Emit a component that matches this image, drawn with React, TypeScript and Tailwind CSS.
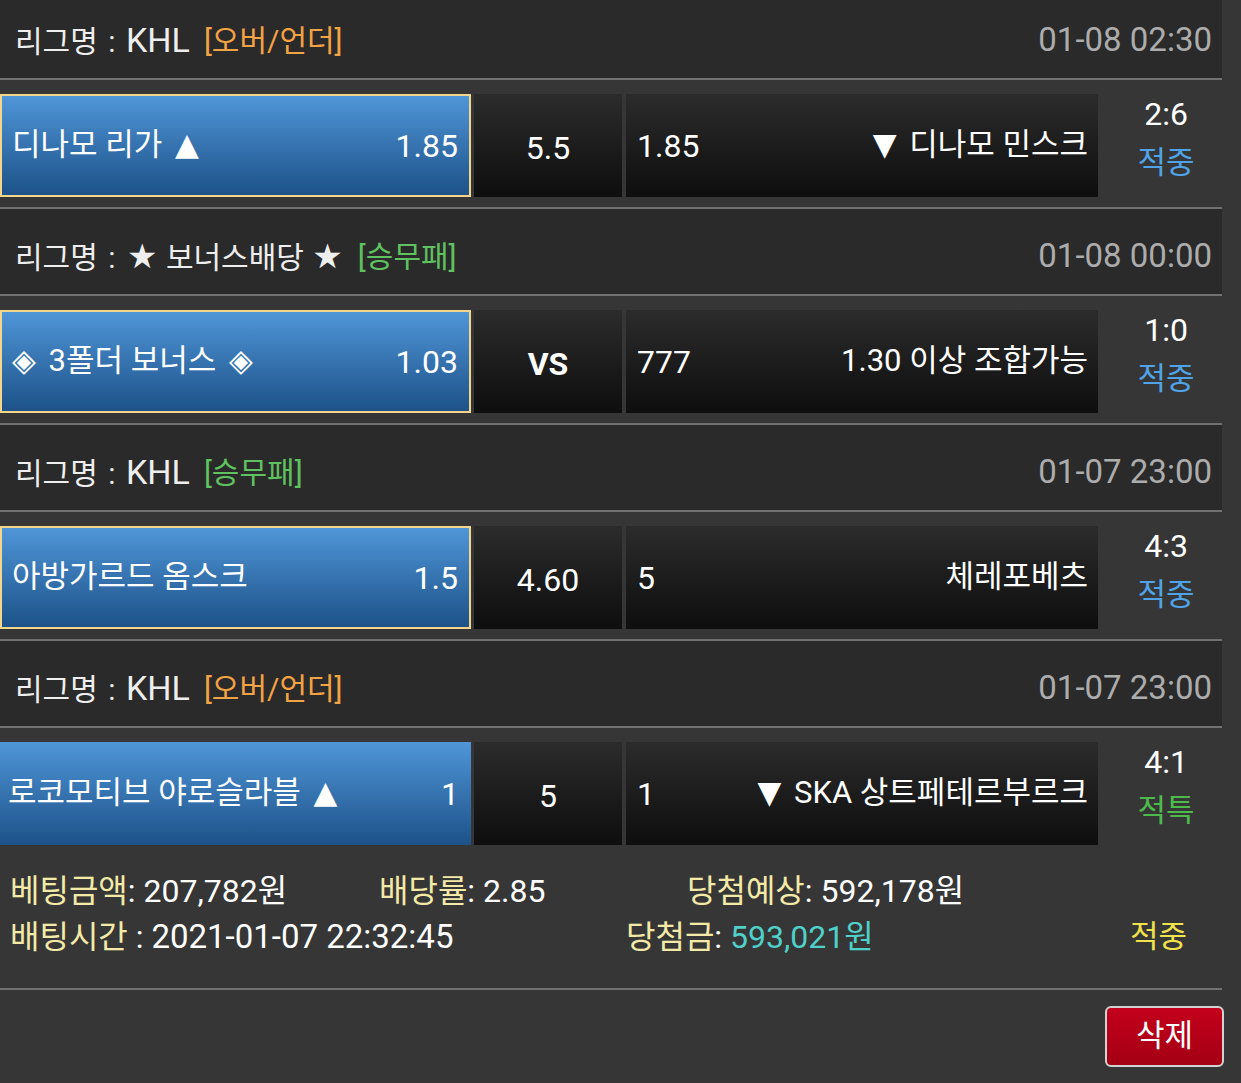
import React from "react";

type Match = {
  league: string;
  tag: string;
  tagColor: string;
  time: string;
  home: string;
  homeOdds: string;
  mid: string;
  midBold?: boolean;
  awayOdds: string;
  away: string;
  score: string;
  result: string;
  resultColor: string;
  picked: boolean;
};

const matches: Match[] = [
  {
    league: "KHL",
    tag: "[오버/언더]",
    tagColor: "text-[#f3a244]",
    time: "01-08 02:30",
    home: "디나모 리가 ▲",
    homeOdds: "1.85",
    mid: "5.5",
    awayOdds: "1.85",
    away: "▼ 디나모 민스크",
    score: "2:6",
    result: "적중",
    resultColor: "text-[#4fa3e6]",
    picked: true,
  },
  {
    league: "★ 보너스배당 ★",
    tag: "[승무패]",
    tagColor: "text-[#5fc15f]",
    time: "01-08 00:00",
    home: "◈ 3폴더 보너스 ◈",
    homeOdds: "1.03",
    mid: "VS",
    midBold: true,
    awayOdds: "777",
    away: "1.30 이상 조합가능",
    score: "1:0",
    result: "적중",
    resultColor: "text-[#4fa3e6]",
    picked: true,
  },
  {
    league: "KHL",
    tag: "[승무패]",
    tagColor: "text-[#5fc15f]",
    time: "01-07 23:00",
    home: "아방가르드 옴스크",
    homeOdds: "1.5",
    mid: "4.60",
    awayOdds: "5",
    away: "체레포베츠",
    score: "4:3",
    result: "적중",
    resultColor: "text-[#4fa3e6]",
    picked: true,
  },
  {
    league: "KHL",
    tag: "[오버/언더]",
    tagColor: "text-[#f3a244]",
    time: "01-07 23:00",
    home: "로코모티브 야로슬라블 ▲",
    homeOdds: "1",
    mid: "5",
    awayOdds: "1",
    away: "▼ SKA 상트페테르부르크",
    score: "4:1",
    result: "적특",
    resultColor: "text-[#4cbb4c]",
    picked: false,
  },
];

const font = { fontFamily: 'Roboto, "DejaVu Sans", "Noto Sans CJK KR", sans-serif' };

// symbols (▲ ▼ ◈ ★) get a little extra room like the original page
const Deco = ({ text }: { text: string }) => {
  const parts = text.split(/([▲▼◈★])/).filter((p) => p !== "");
  return (
    <>
      {parts.map((part, i) => {
        if (!/[▲▼◈★]/.test(part)) return <React.Fragment key={i}>{part}</React.Fragment>;
        if (part === "★")
          return (
            <span key={i} className="mx-[1px] text-[34px]">
              {part}
            </span>
          );
        const side = i === 0 ? "mr-[5px]" : i === parts.length - 1 ? "ml-[5px]" : "mx-[5px]";
        return (
          <span key={i} className={side}>
            {part}
          </span>
        );
      })}
    </>
  );
};

const MatchBlock = ({ m, last }: { m: Match; last: boolean }) => (
  <div>
    <div className="h-[87px] bg-[#2a2a2a] border-b-2 border-[#717171] flex items-center justify-between pl-[15px] pr-[10px] pt-[9px] text-[30px]">
      <div className="flex items-center text-[#eeeeee] whitespace-pre">
        <span>
          리그명<span className="mx-[3px]"> : </span>
          {m.league === "KHL" ? <span className="text-[34px]">KHL</span> : <Deco text={m.league} />}
        </span>
        <span className={`ml-[14px] ${m.tagColor}`}>{m.tag}</span>
      </div>
      <span className="text-[#acacac] text-[33px]">{m.time}</span>
    </div>
    <div
      className={`flex pt-[14px] pb-[10px] text-[31px] text-white ${
        last ? "h-[127px]" : "h-[129px] border-b-2 border-[#717171]"
      }`}
    >
      <div
        className={`w-[471px] flex items-center justify-between bg-gradient-to-b from-[#4f96d8] to-[#1d5289] ${
          m.picked ? "border-2 border-[#f3d68c] pl-[10px] pr-[11px]" : "pl-[8px] pr-[12px]"
        }`}
      >
        <span>
          <Deco text={m.home} />
        </span>
        <span className="text-[32px]">{m.homeOdds}</span>
      </div>
      <div
        className={`ml-[3px] w-[148px] flex items-center justify-center pt-[4px] bg-gradient-to-b from-[#2c2c2c] to-[#0e0e0e] ${
          m.midBold ? "font-bold text-[32px]" : "text-[32px]"
        }`}
      >
        {m.mid}
      </div>
      <div className="ml-[4px] w-[472px] flex items-center justify-between pl-[11px] pr-[10px] bg-gradient-to-b from-[#2c2c2c] to-[#0e0e0e]">
        <span className="text-[32px]">{m.awayOdds}</span>
        <span>
          <Deco text={m.away} />
        </span>
      </div>
      <div className="w-[124px] pl-[12px] flex flex-col items-center pt-[11px] leading-[46px] -mt-[14px] -mb-[10px]">
        <span className="text-[32px]">{m.score}</span>
        <span className={`mt-[3px] ${m.resultColor}`}>{m.result}</span>
      </div>
    </div>
  </div>
);

export default function App() {
  return (
    <div className="min-h-screen bg-[#363636] overflow-hidden" style={font}>
      <div className="w-[1222px] -mt-[7px]">
        {matches.map((m, i) => (
          <MatchBlock key={i} m={m} last={i === matches.length - 1} />
        ))}
        <div className="h-[135px] pt-[13px] pl-[10px] border-b-2 border-[#717171] text-[32px] leading-[46px] text-white">
          <div className="flex">
            <div className="w-[369px]">
              <span className="text-[#f3eaa8]">베팅금액</span>: 207,782원
            </div>
            <div className="w-[308px]">
              <span className="text-[#f3eaa8]">배당률</span>: 2.85
            </div>
            <div>
              <span className="text-[#f3eaa8]">당첨예상</span>: 592,178원
            </div>
          </div>
          <div className="flex">
            <div className="w-[616px]">
              <span className="text-[#f3eaa8]">배팅시간</span> : <span className="text-[33px]">2021-01-07 22:32:45</span>
            </div>
            <div className="w-[504px]">
              <span className="text-[#f3eaa8]">당첨금</span>: <span className="text-[#4fd0c9]">593,021원</span>
            </div>
            <div className="text-[#f1e34c] text-[31px]">적중</div>
          </div>
        </div>
      </div>
      <div className="flex justify-end pt-[16px] pr-[17px]">
        <button className="w-[119px] h-[61px] rounded-[6px] border-2 border-[#d2d2d2] bg-gradient-to-b from-[#c4001c] to-[#a30014] text-white text-[31px] flex items-center justify-center">
          삭제
        </button>
      </div>
    </div>
  );
}
